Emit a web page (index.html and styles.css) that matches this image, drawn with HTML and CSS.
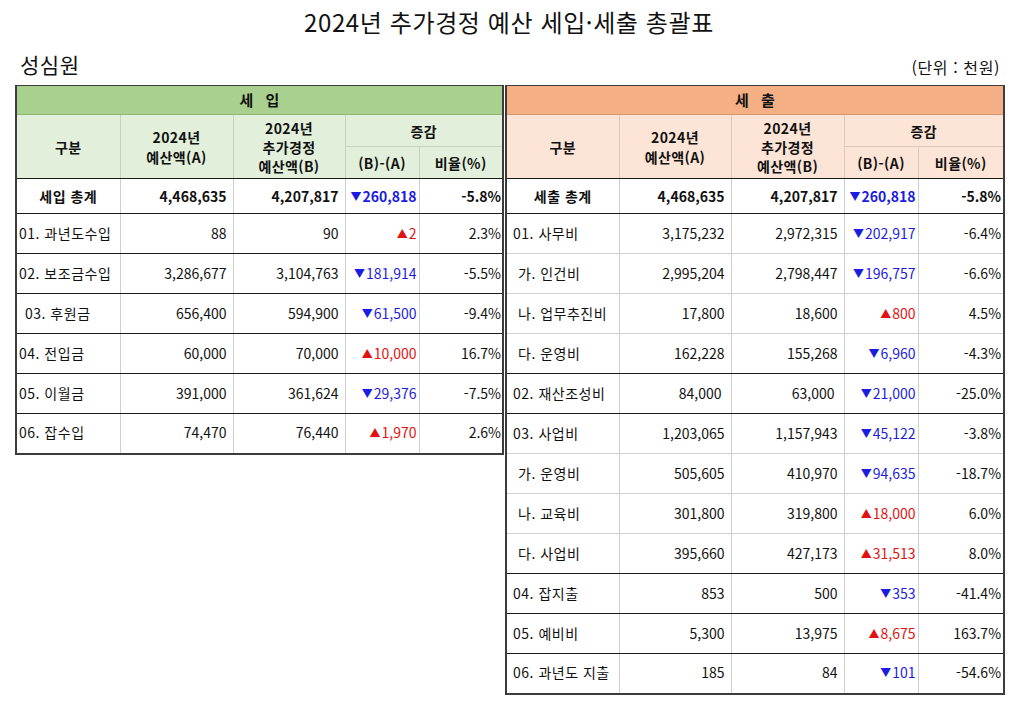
FILE: index.html
```html
<!DOCTYPE html>
<html lang="ko">
<head>
<meta charset="utf-8">
<title>2024년 추가경정 예산 세입·세출 총괄표</title>
<link rel="stylesheet" href="styles.css">
</head>
<body>
<div class="page">
  <h1 class="title">2024년 추가경정 예산 세입·세출 총괄표</h1>
  <div class="sub">
    <span class="org">성심원</span>
    <span class="unit">(단위 : 천원)</span>
  </div>
  <div class="wrap">
    <table class="tbl left">
      <colgroup><col class="c1"><col class="c2"><col class="c3"><col class="c4"><col class="c5"></colgroup>
      <thead>
        <tr class="band"><th colspan="5" class="bandcell in">세 입</th></tr>
        <tr class="h1 in">
          <th rowspan="2">구분</th>
          <th rowspan="2">2024년<br>예산액(A)</th>
          <th rowspan="2" class="three">2024년<br>추가경정<br>예산액(B)</th>
          <th colspan="2">증감</th>
        </tr>
        <tr class="h2 in"><th>(B)-(A)</th><th>비율(%)</th></tr>
      </thead>
      <tbody>
        <tr class="total"><td class="lbl-c">세입 총계</td><td class="num">4,468,635</td><td class="num">4,207,817</td><td class="diff down"><span class="tri">▼</span>260,818</td><td class="pct">-5.8%</td></tr>
        <tr class="row major"><td class="lbl">01. 과년도수입</td><td class="num">88</td><td class="num">90</td><td class="diff up"><span class="tri">▲</span>2</td><td class="pct">2.3%</td></tr>
        <tr class="row major"><td class="lbl">02. 보조금수입</td><td class="num">3,286,677</td><td class="num">3,104,763</td><td class="diff down"><span class="tri">▼</span>181,914</td><td class="pct">-5.5%</td></tr>
        <tr class="row major"><td class="lbl ind">03. 후원금</td><td class="num">656,400</td><td class="num">594,900</td><td class="diff down"><span class="tri">▼</span>61,500</td><td class="pct">-9.4%</td></tr>
        <tr class="row major"><td class="lbl">04. 전입금</td><td class="num">60,000</td><td class="num">70,000</td><td class="diff up"><span class="tri">▲</span>10,000</td><td class="pct">16.7%</td></tr>
        <tr class="row major"><td class="lbl">05. 이월금</td><td class="num">391,000</td><td class="num">361,624</td><td class="diff down"><span class="tri">▼</span>29,376</td><td class="pct">-7.5%</td></tr>
        <tr class="row major"><td class="lbl">06. 잡수입</td><td class="num">74,470</td><td class="num">76,440</td><td class="diff up"><span class="tri">▲</span>1,970</td><td class="pct">2.6%</td></tr>
      </tbody>
    </table>
    <table class="tbl right">
      <colgroup><col class="r1"><col class="r2"><col class="r3"><col class="r4"><col class="r5"></colgroup>
      <thead>
        <tr class="band"><th colspan="5" class="bandcell out">세 출</th></tr>
        <tr class="h1 out">
          <th rowspan="2">구분</th>
          <th rowspan="2">2024년<br>예산액(A)</th>
          <th rowspan="2" class="three">2024년<br>추가경정<br>예산액(B)</th>
          <th colspan="2">증감</th>
        </tr>
        <tr class="h2 out"><th>(B)-(A)</th><th>비율(%)</th></tr>
      </thead>
      <tbody>
        <tr class="total"><td class="lbl-c">세출 총계</td><td class="num">4,468,635</td><td class="num">4,207,817</td><td class="diff down"><span class="tri">▼</span>260,818</td><td class="pct">-5.8%</td></tr>
        <tr class="row"><td class="lbl r">01. 사무비</td><td class="num">3,175,232</td><td class="num">2,972,315</td><td class="diff down"><span class="tri">▼</span>202,917</td><td class="pct">-6.4%</td></tr>
        <tr class="row"><td class="lbl r sub2">가. 인건비</td><td class="num">2,995,204</td><td class="num">2,798,447</td><td class="diff down"><span class="tri">▼</span>196,757</td><td class="pct">-6.6%</td></tr>
        <tr class="row"><td class="lbl r sub2">나. 업무추진비</td><td class="num">17,800</td><td class="num">18,600</td><td class="diff up"><span class="tri">▲</span>800</td><td class="pct">4.5%</td></tr>
        <tr class="row major"><td class="lbl r sub2">다. 운영비</td><td class="num">162,228</td><td class="num">155,268</td><td class="diff down"><span class="tri">▼</span>6,960</td><td class="pct">-4.3%</td></tr>
        <tr class="row major wide"><td class="lbl r">02. 재산조성비</td><td class="num">84,000</td><td class="num">63,000</td><td class="diff down"><span class="tri">▼</span>21,000</td><td class="pct">-25.0%</td></tr>
        <tr class="row"><td class="lbl r">03. 사업비</td><td class="num">1,203,065</td><td class="num">1,157,943</td><td class="diff down"><span class="tri">▼</span>45,122</td><td class="pct">-3.8%</td></tr>
        <tr class="row"><td class="lbl r sub2">가. 운영비</td><td class="num">505,605</td><td class="num">410,970</td><td class="diff down"><span class="tri">▼</span>94,635</td><td class="pct">-18.7%</td></tr>
        <tr class="row"><td class="lbl r sub2">나. 교육비</td><td class="num">301,800</td><td class="num">319,800</td><td class="diff up"><span class="tri">▲</span>18,000</td><td class="pct">6.0%</td></tr>
        <tr class="row major"><td class="lbl r sub2">다. 사업비</td><td class="num">395,660</td><td class="num">427,173</td><td class="diff up"><span class="tri">▲</span>31,513</td><td class="pct">8.0%</td></tr>
        <tr class="row major"><td class="lbl r">04. 잡지출</td><td class="num">853</td><td class="num">500</td><td class="diff down"><span class="tri">▼</span>353</td><td class="pct">-41.4%</td></tr>
        <tr class="row major"><td class="lbl r">05. 예비비</td><td class="num">5,300</td><td class="num">13,975</td><td class="diff up"><span class="tri">▲</span>8,675</td><td class="pct">163.7%</td></tr>
        <tr class="row"><td class="lbl r">06. 과년도 지출</td><td class="num">185</td><td class="num">84</td><td class="diff down"><span class="tri">▼</span>101</td><td class="pct">-54.6%</td></tr>
      </tbody>
    </table>
  </div>
</div>
</body>
</html>
```
FILE: styles.css
```css
html, body {
  margin: 0;
  padding: 0;
  background: #ffffff;
}

body {
  font-family: "Noto Sans CJK KR", "Noto Sans", sans-serif;
  color: #111111;
}

.page {
  padding: 0 9px 0 15px;
}

.title {
  margin: 0;
  height: 44px;
  line-height: 44px;
  text-align: center;
  font-size: 24px;
  font-weight: 400;
  letter-spacing: 0.6px;
  color: #111;
}

.sub {
  display: flex;
  justify-content: space-between;
  align-items: center;
  height: 41px;
  padding: 0 3px 0 5px;
}

.org {
  font-size: 21px;
  line-height: 24px;
  letter-spacing: 0.5px;
  margin-top: -1px;
}

.unit {
  font-size: 16px;
  line-height: 20px;
  letter-spacing: 0.6px;
  margin-top: 5px;
}

.wrap {
  display: flex;
  gap: 1px;
  align-items: flex-start;
}

.tbl {
  border-collapse: collapse;
  table-layout: fixed;
  border: 2px solid #3c3c3c;
  border-top-width: 1px;
  font-size: 14px;
}

.tbl.left { width: 487px; }
.tbl.right { width: 498px; }

.c1 { width: 104px; }
.c2 { width: 113px; }
.c3 { width: 112px; }
.c4 { width: 74px; }
.c5 { width: 84px; }

.r1 { width: 113px; }
.r2 { width: 112px; }
.r3 { width: 113px; }
.r4 { width: 74px; }
.r5 { width: 86px; }

.tbl th,
.tbl td {
  padding: 0;
  overflow: hidden;
  white-space: nowrap;
}

.band { height: 29px; }

.bandcell {
  font-size: 15px;
  font-weight: 700;
  line-height: 20px;
  word-spacing: 8px;
  color: #111;
}

.bandcell.in {
  background: #a9d08e;
  border-bottom: 1px solid #8fb673;
}

.bandcell.out {
  background: #f4b084;
  border-bottom: 1px solid #d49670;
}

.h1 { height: 32px; }
.h2 { height: 32px; }

.h1 th,
.h2 th {
  font-size: 14px;
  font-weight: 700;
  line-height: 20px;
  letter-spacing: 0.4px;
  color: #111;
}

.h1 th.three { line-height: 19px; padding-top: 2px; }

.h1.in th, .h2.in th {
  background: #e2efda;
  border: 1px solid #c4d1bb;
}

.h1.out th, .h2.out th {
  background: #fce4d6;
  border: 1px solid #dcc7ba;
}

.h2 th { border-bottom: 1px solid #1a1a1a !important; }
.h1 th[rowspan] { border-bottom: 1px solid #1a1a1a !important; }

.total { height: 35px; }

.total td {
  font-weight: 700;
  border-left: 1px solid #cfcfcf;
  border-right: 1px solid #cfcfcf;
  border-bottom: 1px solid #1a1a1a;
}

.total .lbl-c { letter-spacing: 0.5px; }

.row { height: 40px; }

.row td {
  border-left: 1px solid #cfcfcf;
  border-right: 1px solid #cfcfcf;
  border-bottom: 1px solid #cfcfcf;
  line-height: 20px;
  padding-bottom: 2px;
}

.row.major td { border-bottom: 1px solid #1a1a1a; }

.lbl {
  text-align: left;
  letter-spacing: 0.5px;
  padding-left: 2px !important;
}

.lbl.r { padding-left: 6px !important; }
.lbl.ind { padding-left: 8px !important; }
.lbl.sub2 { padding-left: 11px !important; }

.lbl-c { text-align: center; }

.num {
  text-align: right;
  padding-right: 6px !important;
}

.diff {
  text-align: right;
  padding-right: 2px !important;
}

.tri {
  font-size: 11px;
  margin-right: 1px;
  vertical-align: 1px;
}

.pct {
  text-align: right;
  padding-right: 1px !important;
}

.right .pct { padding-right: 2px !important; }

.wide .num { padding-right: 9px !important; }

.down { color: #1c1ce0; }
.up { color: #e31212; }
```
